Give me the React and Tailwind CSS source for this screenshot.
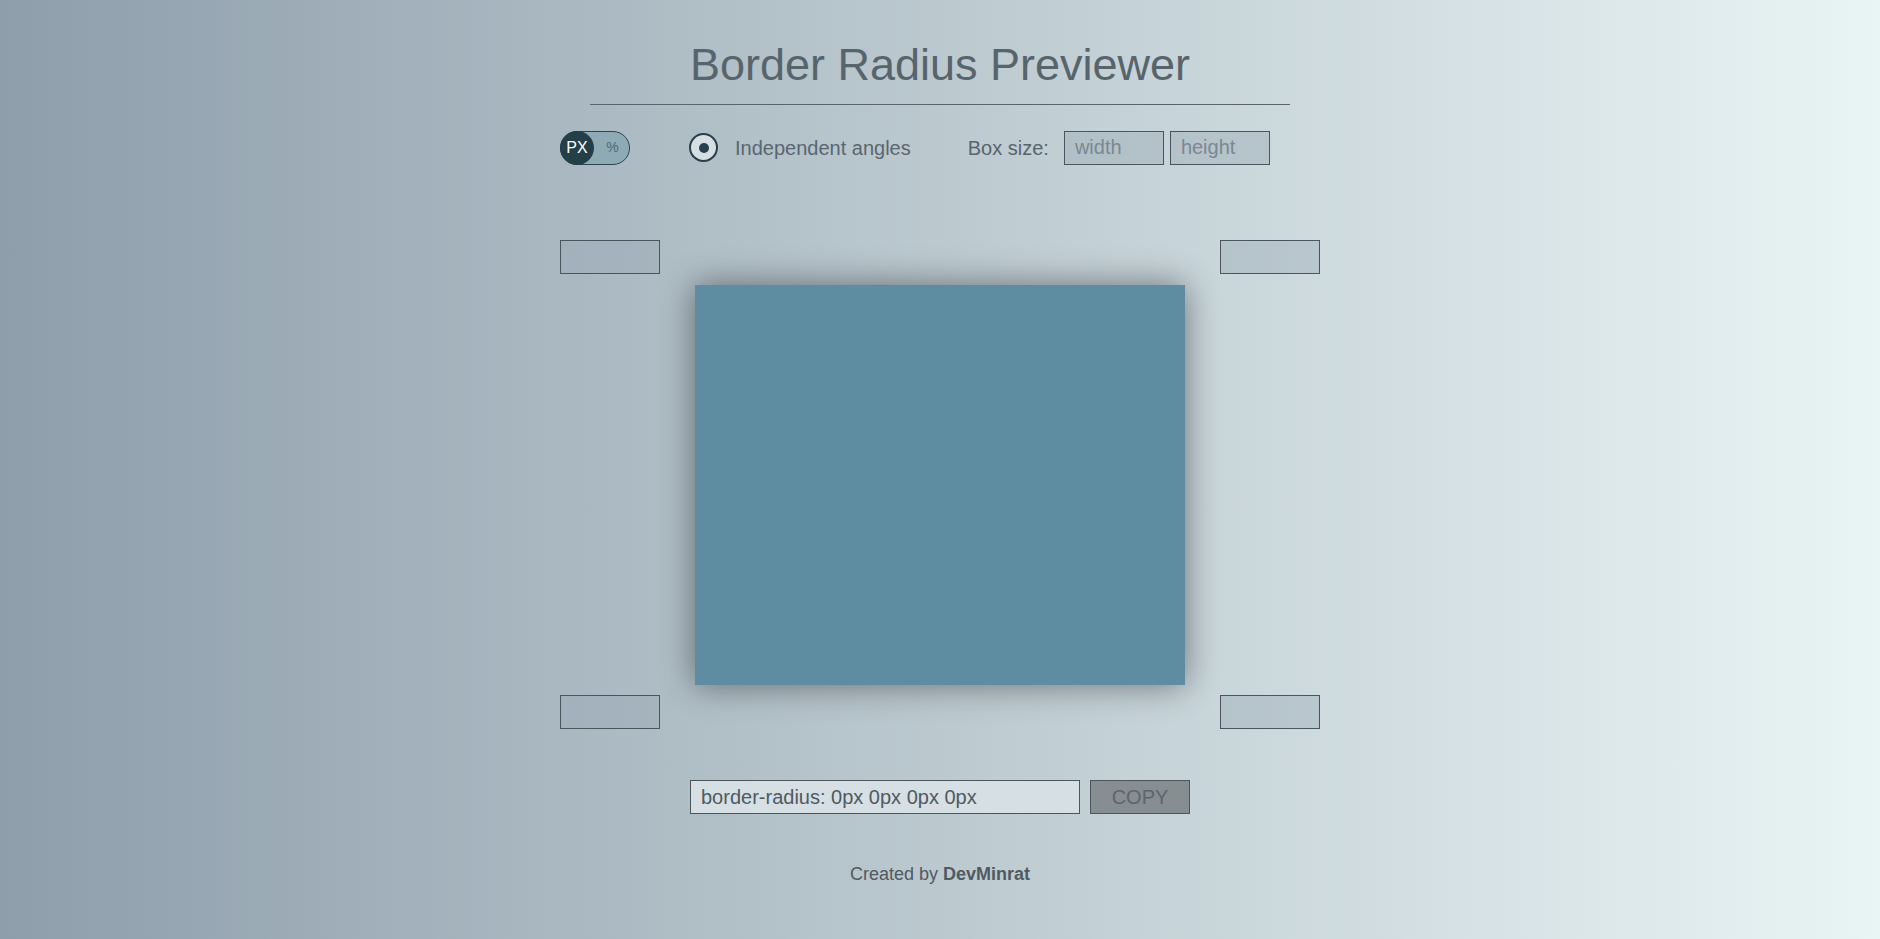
import React from "react";

const font = { fontFamily: '"Liberation Sans", Arial, sans-serif' };

function CornerInput() {
  return (
    <input
      type="text"
      className="w-[100px] h-[34px] border border-[#4a555c] bg-[#98a7b3]/40 px-[10px] text-[20px] text-[#4f5a62] outline-none"
      style={font}
    />
  );
}

export default function App() {
  return (
    <div
      className="min-h-[939px] w-full bg-[linear-gradient(to_right,#8e9eab,#e9f4f4)] flex flex-col items-center text-[#58646c]"
      style={font}
    >
      <h1 className="mt-[42px] text-[45px] leading-none font-normal text-[#58646c]">
        Border Radius Previewer
      </h1>
      <div className="mt-[17px] w-[700px] h-px bg-[#5a646b]" />

      <div className="mt-[25px] w-[760px] h-[35px] flex items-center">
        {/* toggle */}
        <div className="relative w-[70px] h-[34px] rounded-full border border-[#2b4651] bg-[#8eaab5] flex items-center">
          <div className="w-[34px] h-[34px] -ml-px rounded-full bg-[#243f48] flex items-center justify-center text-white text-[16px]">
            PX
          </div>
          <div className="flex-1 text-center text-[14px] text-[#4d6a76] pl-[2px]">%</div>
        </div>

        {/* radio */}
        <div className="ml-[59px] w-[29px] h-[29px] rounded-full border-2 border-[#273f48] bg-[#d5dee2] flex items-center justify-center">
          <div className="w-[10px] h-[10px] rounded-full bg-[#273f48]" />
        </div>
        <span className="ml-[17px] text-[20px] text-[#5a6670]">Independent angles</span>

        <span className="ml-[57px] text-[20px] text-[#58646c]">Box size:</span>
        <input
          type="text"
          placeholder="width"
          className="ml-[15px] w-[100px] h-[34px] border border-[#4a555c] bg-[#98a7b3]/40 px-[10px] text-[20px] text-[#4f5a62] placeholder:text-[#7b8891] outline-none"
          style={font}
        />
        <input
          type="text"
          placeholder="height"
          className="ml-[6px] w-[100px] h-[34px] border border-[#4a555c] bg-[#98a7b3]/40 px-[10px] text-[20px] text-[#4f5a62] placeholder:text-[#7b8891] outline-none"
          style={font}
        />
      </div>

      <div className="mt-[75px] grid grid-cols-[100px_490px_100px] grid-rows-[34px_400px_34px] gap-x-[35px] gap-y-[10.5px]">
        <CornerInput />
        <div />
        <CornerInput />
        <div />
        <div className="bg-[#5e8ca0] shadow-[0_0_32px_rgba(0,0,0,0.45)]" />
        <div />
        <CornerInput />
        <div />
        <CornerInput />
      </div>

      <div className="mt-[51px] flex items-center gap-[10px]">
        <input
          type="text"
          readOnly
          value="border-radius: 0px 0px 0px 0px"
          className="w-[390px] h-[34px] border border-[#4a555c] bg-[#d6dfe3] px-[10px] text-[20px] text-[#4f5a62] outline-none"
          style={font}
        />
        <button
          className="w-[100px] h-[34px] border border-[#4a555c] bg-[#878e92] text-[20px] text-[#5e656a]"
          style={font}
        >
          COPY
        </button>
      </div>

      <p className="mt-[51px] text-[18px] leading-none text-[#4f5a62]">
        Created by <span className="font-bold">DevMinrat</span>
      </p>
    </div>
  );
}
